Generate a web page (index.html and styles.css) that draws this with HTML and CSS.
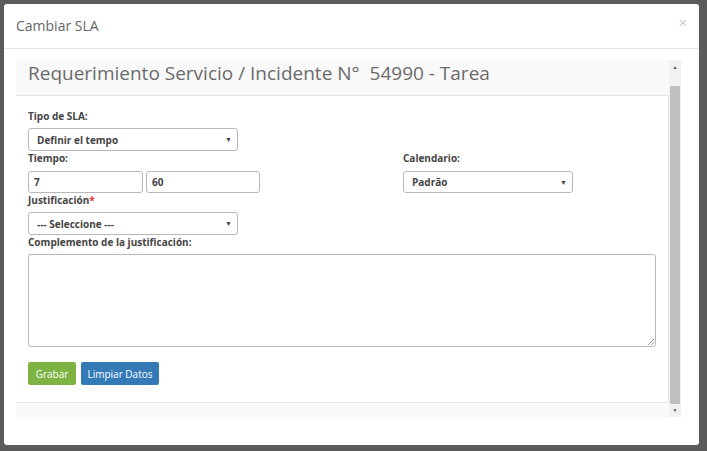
FILE: index.html
```html
<!DOCTYPE html>
<html lang="es">
<head>
<meta charset="utf-8">
<title>Cambiar SLA</title>
<link rel="stylesheet" href="styles.css">
</head>
<body>
<div class="modal">
  <div class="modal-header">
    <span class="modal-title">Cambiar SLA</span>
    <span class="close">×</span>
  </div>
  <div class="modal-body">
    <div class="scroll">
      <div class="content">
        <h1 class="page-title">Requerimiento Servicio / Incidente N°&nbsp; 54990 - Tarea</h1>
        <div class="panel">
          <div class="field">
            <label class="lbl">Tipo de SLA:</label>
            <div class="select w210"><span>Definir el tempo</span><span class="caret">▼</span></div>
          </div>
          <div class="row">
            <div class="field col-left">
              <label class="lbl">Tiempo:</label>
              <div class="pair">
                <div class="input w115">7</div>
                <div class="input w114">60</div>
              </div>
            </div>
            <div class="field col-right">
              <label class="lbl">Calendario:</label>
              <div class="select w170 h22"><span>Padrão</span><span class="caret">▼</span></div>
            </div>
          </div>
          <div class="field">
            <label class="lbl">Justificación<span class="req">*</span></label>
            <div class="select w210"><span>--- Seleccione ---</span><span class="caret">▼</span></div>
          </div>
          <div class="field">
            <label class="lbl">Complemento de la justificación:</label>
            <div class="textarea"><span class="grip"></span></div>
          </div>
          <div class="buttons">
            <button class="btn btn-green">Grabar</button>
            <button class="btn btn-blue">Limpiar Datos</button>
          </div>
        </div>
      </div>
      <div class="scrollbar">
        <div class="arrow up">▲</div>
        <div class="thumb"></div>
        <div class="arrow down">▼</div>
      </div>
    </div>
  </div>
</div>
</body>
</html>
```

FILE: styles.css
```css
html, body {
  margin: 0;
  padding: 0;
}
body {
  background: #5b5b5b;
  width: 707px;
  height: 451px;
  overflow: hidden;
  font-family: "Open Sans", "Noto Sans", sans-serif;
  color: #333;
}
.modal {
  margin: 4px 0 0 4px;
  width: 695px;
  height: 441px;
  background: #fff;
  border-radius: 3px;
  box-sizing: border-box;
  display: flex;
  flex-direction: column;
}
.modal-header {
  height: 45px;
  box-sizing: border-box;
  border-bottom: 1px solid #e5e5e5;
  display: flex;
  align-items: center;
  justify-content: space-between;
  padding: 0 12px 2px 12px;
}
.modal-title {
  font-size: 14px;
  color: #666;
}
.close {
  font-size: 15px;
  color: #c8c8c8;
  margin-top: -6px;
}
.modal-body {
  padding: 11px 18px 0 12px;
}
.scroll {
  display: flex;
  height: 357px;
}
.content {
  flex: 1;
  background: #f9f9f9;
  display: flex;
  flex-direction: column;
}
.page-title {
  margin: 0;
  height: 35px;
  line-height: 26px;
  padding-left: 12px;
  font-size: 19px;
  font-weight: 400;
  color: #6b6b6b;
  white-space: nowrap;
}
.panel {
  background: #fff;
  border: 1px solid #e4e4e4;
  border-left: 0;
  padding: 13px 12px 15px 12px;
  height: 308px;
  box-sizing: border-box;
}
.field {
  display: flex;
  flex-direction: column;
}
.lbl {
  display: block;
  font-size: 10px;
  font-weight: 700;
  color: #444;
  line-height: 14px;
  margin-bottom: 5px;
}
.req {
  color: #f03434;
}
.row {
  display: flex;
}
.col-left {
  width: 375px;
}
.col-right {
  flex: 1;
}
.row .lbl {
  margin-bottom: 6px;
}
.select, .input {
  box-sizing: border-box;
  height: 23px;
  border: 1px solid #b8b8b8;
  border-radius: 3px;
  font-size: 10px;
  font-weight: 700;
  color: #444;
  display: flex;
  align-items: center;
  justify-content: space-between;
  padding: 0 5px 0 8px;
  background: #fff;
}
.select.h22, .input {
  height: 22px;
}
.input {
  padding-left: 5px;
}
.caret {
  font-size: 7px;
  color: #444;
}
.w210 { width: 210px; }
.w170 { width: 170px; }
.w115 { width: 115px; }
.w114 { width: 114px; }
.pair {
  display: flex;
  gap: 3px;
}
.textarea {
  position: relative;
  box-sizing: border-box;
  width: 628px;
  height: 93px;
  border: 1px solid #b8b8b8;
  border-radius: 3px;
}
.grip {
  position: absolute;
  right: 1px;
  bottom: 1px;
  width: 6px;
  height: 6px;
  background: linear-gradient(135deg, transparent 45%, #999 45%, #999 55%, transparent 55%, transparent 70%, #999 70%, #999 80%, transparent 80%);
}
.buttons {
  display: flex;
  gap: 5px;
  margin-top: 15px;
}
.btn {
  height: 23px;
  border: 0;
  border-radius: 2px;
  color: #fff;
  font-family: "Open Sans", "Noto Sans", sans-serif;
  font-size: 10px;
  padding: 0;
}
.btn-green {
  background: #7cb342;
  width: 48px;
}
.btn-blue {
  background: #337ab7;
  width: 78px;
}
.scrollbar {
  width: 13px;
  background: #f1f1f1;
  display: flex;
  flex-direction: column;
  align-items: center;
}
.arrow {
  font-size: 5px;
  color: #505050;
  height: 13px;
  line-height: 13px;
}
.arrow.up {
  height: 26px;
  line-height: 14px;
}
.thumb {
  width: 10px;
  flex: 1;
  background: #c1c1c1;
}
```
